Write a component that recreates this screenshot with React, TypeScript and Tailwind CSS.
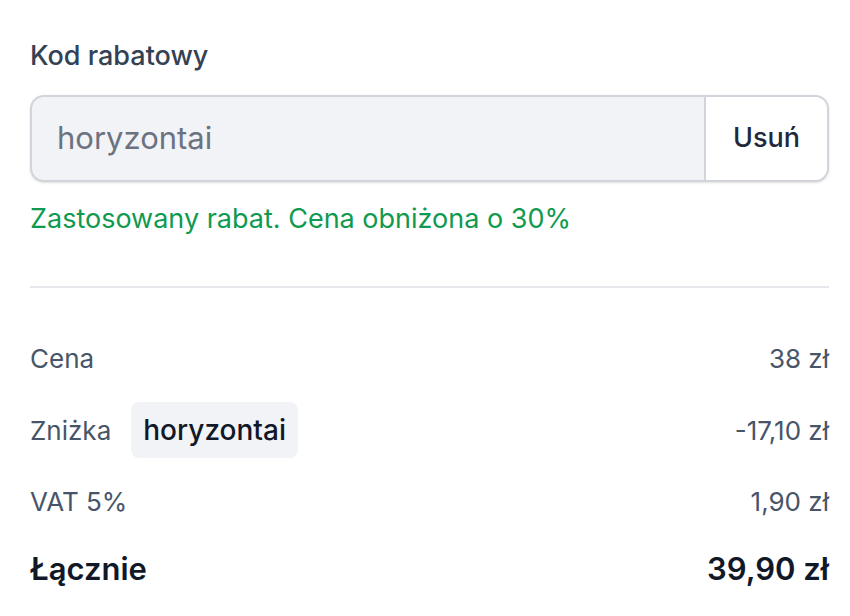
export default function App() {
  return (
    <div className="h-[616px] overflow-hidden bg-white pl-[30px] pt-[37px] font-['Inter',sans-serif] text-[#475569]">
      <div className="w-[799px]">
        <label className="block text-[27px] leading-[38px] font-medium text-[#334155]">Kod rabatowy</label>

        <div className="mt-[20px] flex h-[87px] overflow-hidden rounded-[14px] border-2 border-[#d1d5db] bg-[#f1f3f7] shadow-sm">
          <input
            readOnly
            value="horyzontai"
            className="min-w-0 flex-1 bg-transparent px-[25px] text-[31px] text-[#6b7280] outline-none"
          />
          <button
            type="button"
            className="w-[123px] border-l-2 border-[#d1d5db] bg-white text-[27px] font-medium text-[#1e293b]"
          >
            Usuń
          </button>
        </div>

        <p className="mt-[18px] text-[27px] leading-[38px] text-[#0f9a4f]">Zastosowany rabat. Cena obniżona o 30%</p>

        <hr className="mt-[48px] border-t-2 border-[#e5e7eb]" />

        <div className="mt-[34px] flex flex-col">
          <div className="flex h-[72px] items-center justify-between text-[26px]">
            <span>Cena</span>
            <span>38 zł</span>
          </div>
          <div className="flex h-[72px] items-center justify-between text-[26px]">
            <div className="flex items-center gap-[20px]">
              <span>Zniżka</span>
              <span className="rounded-[8px] bg-[#f1f3f7] px-[12px] py-[10px] text-[28px] leading-[36px] font-medium text-[#111827]">horyzontai</span>
            </div>
            <span>-17,10 zł</span>
          </div>
          <div className="flex h-[70px] items-center justify-between text-[26px]">
            <span>VAT 5%</span>
            <span>1,90 zł</span>
          </div>
          <div className="flex h-[66px] items-center justify-between text-[31px] font-semibold text-[#111827]">
            <span>Łącznie</span>
            <span>39,90 zł</span>
          </div>
        </div>
      </div>
    </div>
  );
}
